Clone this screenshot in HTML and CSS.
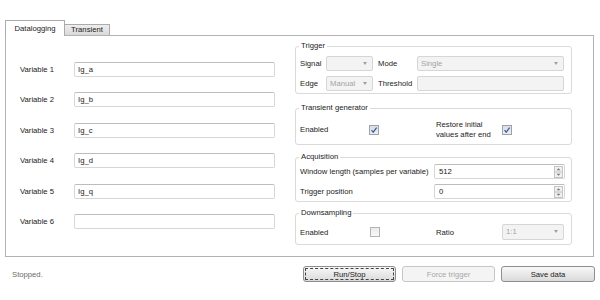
FILE: index.html
```html
<!DOCTYPE html>
<html lang="en">
<head>
  <meta charset="UTF-8">
  <title>Datalogging</title>
  <link rel="stylesheet" href="styles.css">
</head>
<body>
  <div class="window">
    <div class="tabs">
      <div class="tab active">Datalogging</div>
      <div class="tab">Transient</div>
    </div>

    <div class="pane">
      <div class="vars">
        <label>Variable 1</label><div class="edit">Ig_a</div>
        <label>Variable 2</label><div class="edit">Ig_b</div>
        <label>Variable 3</label><div class="edit">Ig_c</div>
        <label>Variable 4</label><div class="edit">Ig_d</div>
        <label>Variable 5</label><div class="edit">Ig_q</div>
        <label>Variable 6</label><div class="edit"></div>
      </div>

      <div class="groups">
        <fieldset class="trigger">
          <legend>Trigger</legend>
          <div class="trig-grid">
            <label>Signal</label><div class="combo disabled"></div>
            <label class="pad">Mode</label><div class="combo disabled">Single</div>
            <label>Edge</label><div class="combo disabled">Manual</div>
            <label class="pad">Threshold</label><div class="edit disabled"></div>
          </div>
        </fieldset>

        <fieldset class="tgen">
          <legend>Transient generator</legend>
          <div class="check-grid">
            <label>Enabled</label>
            <span class="check on"><svg width="10" height="10" viewBox="0 0 10 10"><path d="M2.5 5.2 L4.2 7.2 L7.6 2.6" fill="none" stroke="#3b5b99" stroke-width="1.2"/></svg></span>
            <span></span>
            <label>Restore initial<br>values after end</label>
            <span class="check on"><svg width="10" height="10" viewBox="0 0 10 10"><path d="M2.5 5.2 L4.2 7.2 L7.6 2.6" fill="none" stroke="#3b5b99" stroke-width="1.2"/></svg></span>
          </div>
        </fieldset>

        <fieldset class="acq">
          <legend>Acquisition</legend>
          <div class="acq-grid">
            <label>Window length (samples per variable)</label>
            <div class="spin">512<span class="arrows"><svg width="9" height="12" viewBox="0 0 9 12"><rect x="0.5" y="0.5" width="8" height="11" fill="#f1f1f1" stroke="#c4c4c4"/><line x1="1" y1="6" x2="8" y2="6" stroke="#c4c4c4"/><path d="M2.5 4.2 L4.5 2.2 L6.5 4.2 Z" fill="#777"/><path d="M2.5 7.8 L4.5 9.8 L6.5 7.8 Z" fill="#777"/></svg></span></div>
            <label>Trigger position</label>
            <div class="spin">0<span class="arrows"><svg width="9" height="12" viewBox="0 0 9 12"><rect x="0.5" y="0.5" width="8" height="11" fill="#f1f1f1" stroke="#c4c4c4"/><line x1="1" y1="6" x2="8" y2="6" stroke="#c4c4c4"/><path d="M2.5 4.2 L4.5 2.2 L6.5 4.2 Z" fill="#777"/><path d="M2.5 7.8 L4.5 9.8 L6.5 7.8 Z" fill="#777"/></svg></span></div>
          </div>
        </fieldset>

        <fieldset class="down">
          <legend>Downsampling</legend>
          <div class="down-grid">
            <label>Enabled</label>
            <span class="check"></span>
            <span></span>
            <label>Ratio</label>
            <div class="combo disabled tall">1:1</div>
          </div>
        </fieldset>
      </div>
    </div>

    <div class="footer">
      <span class="status">Stopped.</span>
      <div class="buttons">
        <button class="focus">Run/Stop</button>
        <button disabled>Force trigger</button>
        <button>Save data</button>
      </div>
    </div>
  </div>
</body>
</html>
```

FILE: styles.css
```css
body {
  margin: 0;
  background: #fff;
  font-family: 'Liberation Sans', Arial, sans-serif;
  font-size: 7.7px;
  color: #222;
}
.window {
  width: 600px;
  height: 300px;
  box-sizing: border-box;
  padding: 20px 5px 0 5px;
}
.tabs {
  display: flex;
  align-items: flex-end;
  height: 15px;
}
.tab {
  box-sizing: border-box;
  height: 11px;
  width: 45px;
  line-height: 10px;
  text-align: center;
  border: 1px solid #ababab;
  border-left: none;
  border-bottom: none;
  background: linear-gradient(#eeeeee, #d9d9d9);
}
.tab.active {
  height: 16px;
  width: 60px;
  line-height: 15px;
  border-left: 1px solid #ababab;
  background: #fff;
  position: relative;
  z-index: 1;
  margin-bottom: -1px;
}
.pane {
  box-sizing: border-box;
  width: 589px;
  height: 222px;
  border: 1px solid #b2b2b2;
  display: flex;
}
.vars {
  padding: 26px 0 0 14px;
  display: grid;
  grid-template-columns: 54px 201px;
  grid-auto-rows: 15px;
  row-gap: 15.4px;
  align-items: center;
}
.edit, .combo, .spin {
  box-sizing: border-box;
  height: 15px;
  line-height: 13px;
  padding-left: 3px;
  border: 1px solid #d6d6d6;
  border-top-color: #bdbdbd;
  border-radius: 2px;
  background: #fff;
  position: relative;
}
.edit.disabled, .combo.disabled {
  background: #f3f3f3;
  border-color: #d6d6d6;
  color: #a4a4a4;
}
.combo::after {
  content: "";
  position: absolute;
  right: 5px;
  top: 5px;
  border-left: 2.5px solid transparent;
  border-right: 2.5px solid transparent;
  border-top: 3px solid #a0a0a0;
}
.combo.tall {
  height: 16px;
  line-height: 14px;
}
.groups {
  margin-left: 20px;
  width: 277px;
  display: flex;
  flex-direction: column;
}
fieldset {
  margin: 0;
  padding: 0 7px 2px 3px;
  border: 1px solid #dadada;
  border-radius: 3px;
  min-inline-size: 0;
}
legend {
  padding: 0 2px;
  line-height: 10px;
}
.trigger { margin-top: 5px; }
.tgen { margin-top: 9px; padding-bottom: 4px; }
.acq { margin-top: 7px; padding-bottom: 2px; }
.down { margin-top: 6px; padding-bottom: 4px; }
.trig-grid {
  margin-top: 5px;
  padding-left: 1px;
  display: grid;
  grid-template-columns: 26px 47px 44px 147px;
  grid-auto-rows: 15px;
  row-gap: 5px;
  align-items: center;
}
.pad { padding-left: 5px; }
.check-grid {
  margin-top: 7px;
  padding-left: 1px;
  display: grid;
  grid-template-columns: 69px 10px 57px 66px 10px;
  height: 20px;
  align-items: center;
  line-height: 10px;
}
.check {
  box-sizing: border-box;
  width: 10px;
  height: 10px;
  border: 1px solid #b4b4b4;
  background: linear-gradient(#ebebeb, #f9f9f9);
  display: flex;
}
.check svg { margin: -1px; }
.check.on {
  background: linear-gradient(#d9dde4, #eceef2);
  border-color: #9ea3ab;
}
.acq-grid {
  margin-top: 2px;
  padding-left: 1px;
  display: grid;
  grid-template-columns: 134px 131px;
  grid-auto-rows: 15px;
  row-gap: 5px;
  align-items: center;
}
.spin { padding-left: 4px; }
.arrows {
  position: absolute;
  right: 1px;
  top: 1px;
  height: 12px;
}
.down-grid {
  margin-top: 6px;
  padding-left: 1px;
  display: grid;
  grid-template-columns: 70px 10px 56px 66px 62px;
  height: 16px;
  align-items: center;
}
.footer {
  display: flex;
  align-items: center;
  margin-top: 9px;
}
.status {
  padding-left: 7px;
  color: #6a6a6a;
}
.buttons {
  margin-left: auto;
  display: flex;
  gap: 6px;
}
button {
  box-sizing: border-box;
  width: 93px;
  height: 16px;
  padding: 0;
  font-family: inherit;
  font-size: 7.7px;
  color: #222;
  border: 1px solid #8e8e8e;
  border-radius: 3px;
  background: linear-gradient(#f8f8f8, #dadada);
}
button.focus {
  outline: 1px dashed #444;
  outline-offset: -3px;
}
button:disabled {
  color: #a8a8a8;
  border-color: #c6c6c6;
  background: #f4f4f4;
}
button:last-child { width: 94px; }
```
